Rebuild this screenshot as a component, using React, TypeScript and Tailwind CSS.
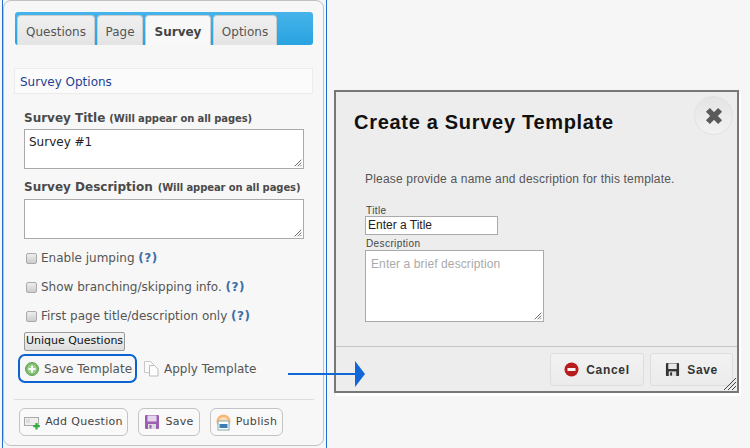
import React from "react";

const Grip = ({ size = 8, color = "#555" }: { size?: number; color?: string }) => (
  <svg width={size} height={size} viewBox="0 0 11 11" className="absolute right-[1px] bottom-[1px]">
    <path d="M1 10 L10 1 M5 10 L10 5 M8.5 10 L10 8.5" stroke={color} strokeWidth="1.2" fill="none" />
  </svg>
);

const Check = ({ label }: { label: string }) => (
  <div className="flex items-center h-[29px] pl-[22px] gap-[4px] text-[12px] text-[#555]">
    <span className="mt-[2px] w-[11px] h-[11px] rounded-[2px] border border-[#aaa] bg-gradient-to-b from-[#eee] to-[#ccc]" />
    <span className="whitespace-nowrap">
      {label} <b className="text-[#3b6ea5] tracking-[0.5px]">(?)</b>
    </span>
  </div>
);

const Floppy = ({ body, light, size = 20 }: { body: string; light: string; size?: number }) => (
  <svg width={size} height={size} viewBox="0 0 16 16">
    <rect x="1" y="1" width="14" height="14" rx="1" fill={body} />
    <rect x="3.5" y="1.5" width="9" height="6" fill={light} />
    <rect x="4" y="10" width="8" height="5" fill="#ddd" />
    <rect x="5.5" y="11" width="2" height="3.5" fill={body} />
  </svg>
);

const ActionButton = ({ w, icon, label, gap }: { w: string; icon: React.ReactNode; label: string; gap: string }) => (
  <button className={`${w} ${gap} h-[28px] flex items-center justify-center rounded-[6px] border border-[#c4c4c4] bg-[#f9f9f9] text-[11px] text-[#444] tracking-[0.3px]`}>
    {icon}
    <span>{label}</span>
  </button>
);

export default function App() {
  return (
    <div className="relative flex w-[750px] h-[448px] overflow-hidden bg-[#f6f6f6] font-['DejaVu_Sans',sans-serif]">
      <div className="ml-[2px] w-[325px] h-[448px] shrink-0 border-x border-[#1e6fd2] pr-[1px]">
        <div className="h-[446px] w-[321px] border border-[#c2c2c2] rounded-[8px] bg-[#f7f7f7] pl-[10px] pr-[10px] pt-[11px]">
          <div className="ml-[1px] flex items-end h-[33px] w-[298px] gap-[2px] pl-[2px] rounded-[3px] bg-gradient-to-b from-[#45b4ea] to-[#27a3e0]">
            {[
              ["Questions", "w-[78px]"],
              ["Page", "w-[46px]"],
              ["Survey", "w-[66px]"],
              ["Options", "w-[64px]"],
            ].map(([t, w]) => (
              <div
                key={t}
                className={
                  t === "Survey"
                    ? `${w} h-[30px] pt-[2px] flex items-center justify-center rounded-t-[4px] border-x border-t border-[#ccc] bg-[#f8f8f8] text-[12px] font-bold text-[#444]`
                    : `${w} h-[30px] pt-[2px] flex items-center justify-center rounded-t-[4px] border-x border-t border-[#ccc] bg-gradient-to-b from-[#f0f0f0] to-[#e4e4e4] text-[12px] text-[#555]`
                }
              >
                {t}
              </div>
            ))}
          </div>

          <div className="mt-[23px] h-[26px] w-[299px] flex items-center pl-[5px] pt-[1px] border border-[#ececec] bg-[#fbfbfb] text-[12px] text-[#1b3f94]">
            Survey Options
          </div>

          <div className="ml-[10px] mt-[14px] w-[280px]">
            <div className="h-[20px] flex items-center gap-[4px] font-bold text-[#4a4a4a] whitespace-nowrap">
              <span className="text-[12px]">Survey Title</span>
              <span className="text-[10px] tracking-[-0.1px]">(Will appear on all pages)</span>
            </div>
            <div className="relative mt-[1px] h-[40px] border border-[#aaa] bg-white pl-[4px] pt-[3px] text-[12px] text-[#222]">
              Survey #1
              <Grip />
            </div>
            <div className="mt-[8px] h-[20px] flex items-center gap-[5px] font-bold text-[#4a4a4a] whitespace-nowrap">
              <span className="text-[12px]">Survey Description</span>
              <span className="text-[10px] tracking-[-0.1px]">(Will appear on all pages)</span>
            </div>
            <div className="relative mt-[2px] h-[40px] border border-[#aaa] bg-white">
              <Grip />
            </div>
          </div>

          <div className="-ml-[10px] mt-[4px]">
            <Check label="Enable jumping" />
            <Check label="Show branching/skipping info." />
            <Check label="First page title/description only" />
          </div>

          <button className="block ml-[10px] mt-[2px] w-[101px] h-[19px] rounded-[2px] border border-[#999] bg-gradient-to-b from-[#f4f4f4] to-[#ddd] text-[11px] text-[#111] whitespace-nowrap">
            Unique Questions
          </button>

          <div className="flex items-center mt-[3px] ml-[4px] h-[29px] text-[12px] text-[#555]">
            <div className="flex items-center h-[29px] w-[119px] pl-[5px] gap-[5px] rounded-[7px] border-2 border-[#0b63d1]">
              <svg width="14" height="14" viewBox="0 0 14 14" className="shrink-0">
                <circle cx="7" cy="7" r="6.5" fill="#7dbb6b" stroke="#5f9f57" />
                <circle cx="7" cy="7" r="4.5" fill="#9ad08c" />
                <path d="M7 3.5v7M3.5 7h7" stroke="#fff" strokeWidth="2" />
              </svg>
              <span className="whitespace-nowrap">Save Template</span>
            </div>
            <svg width="17" height="17" viewBox="0 0 17 17" className="ml-[6px] shrink-0">
              <path d="M1.5 1.5h6l3 3v8h-9z" fill="#fafafa" stroke="#c8c8c8" />
              <path d="M6.5 5.5h5l3.5 3.5v7h-8.5z" fill="#fdfdfd" stroke="#bcbcbc" />
            </svg>
            <span className="ml-[4px] whitespace-nowrap">Apply Template</span>
          </div>

          <div className="mt-[16px] w-[300px] border-t border-[#ddd]" />

          <div className="flex gap-[10px] mt-[8px] ml-[5px]">
            <ActionButton
              w="w-[109px]"
              gap="gap-[4px]"
              label="Add Question"
              icon={
                <svg width="17" height="15" viewBox="0 0 17 15">
                  <rect x="0.5" y="2.5" width="14" height="8" fill="#eee" stroke="#aaa" />
                  <path d="M2 5h4M2 7h4" stroke="#ccc" />
                  <path d="M12.5 8v6.5M9.2 11.2h6.6" stroke="#2fae3a" strokeWidth="2.2" />
                </svg>
              }
            />
            <ActionButton w="w-[62px]" gap="gap-[5px]" label="Save" icon={<Floppy body="#9a5fb0" light="#e6d5ee" size={16} />} />
            <ActionButton
              w="w-[73px]"
              gap="gap-[5px]"
              label="Publish"
              icon={
                <svg width="15" height="17" viewBox="0 0 15 17">
                  <circle cx="7.5" cy="7.5" r="7" fill="#f7b775" />
                  <circle cx="7.5" cy="7.5" r="4.5" fill="#fbdcb8" />
                  <rect x="2" y="7" width="11" height="9" fill="#fff" stroke="#8aa" />
                  <rect x="3.5" y="10" width="8" height="4" fill="#3c7fb5" />
                </svg>
              }
            />
          </div>
        </div>
      </div>

      <div className="relative ml-[7px] mt-[90px] w-[405px] h-[303px] shrink-0 border-2 border-[#777] bg-[#ededed] shadow-[2px_3px_0_#fff] font-['Liberation_Sans',sans-serif]">
        <div className="absolute right-[4px] top-[4px] w-[39px] h-[39px] rounded-full border border-[#e2e2e2] bg-gradient-to-b from-[#e4e4e4] to-[#f2f2f2] flex items-center justify-center">
          <svg width="20" height="20" viewBox="0 0 18 18">
            <path d="M3.5 3.5 L14.5 14.5 M14.5 3.5 L3.5 14.5" stroke="#5a5a5a" strokeWidth="5" />
          </svg>
        </div>
        <h1 className="ml-[18px] mt-[18px] h-[24px] text-[20px] leading-[24px] font-bold text-[#111] tracking-[0.7px]">
          Create a Survey Template
        </h1>
        <p className="ml-[29px] mt-[37px] h-[16px] text-[12px] leading-[16px] text-[#555] tracking-[0.18px] whitespace-nowrap">
          Please provide a name and description for this template.
        </p>
        <div className="ml-[30px] mt-[18px] h-[10px] text-[10px] leading-[12px] text-[#444] tracking-[0.4px]">Title</div>
        <div className="ml-[29px] mt-[1px] w-[133px] h-[19px] border border-[#aaa] bg-white pl-[2px] text-[12px] leading-[16px] text-[#222]">
          Enter a Title
        </div>
        <div className="ml-[30px] mt-[3px] h-[12px] text-[10px] leading-[12px] text-[#444] tracking-[0.4px]">Description</div>
        <div className="relative ml-[29px] w-[179px] h-[72px] border border-[#aaa] bg-white pl-[5px] pt-[5px] text-[12px] leading-[16px] text-[#aaa] tracking-[0.1px]">
          Enter a brief description
          <Grip size={8} />
        </div>
        <div className="mt-[24px] border-t border-[#c6c6c6]" />
        <div className="flex justify-end gap-[6px] mt-[6px] pr-[4px]">
          <button className="w-[94px] h-[33px] flex items-center justify-center gap-[7px] rounded-[3px] border border-[#ddd] bg-gradient-to-b from-[#f2f2f2] to-[#ebebeb] text-[12px] font-bold text-[#333] tracking-[0.7px]">
            <svg width="15" height="15" viewBox="0 0 15 15">
              <circle cx="7.5" cy="7.5" r="7" fill="#b91c1c" />
              <rect x="3.5" y="6" width="8" height="3" fill="#f5f5f5" />
            </svg>
            Cancel
          </button>
          <button className="w-[83px] h-[33px] flex items-center justify-center gap-[7px] rounded-[3px] border border-[#ddd] bg-gradient-to-b from-[#f2f2f2] to-[#ebebeb] text-[12px] font-bold text-[#333] tracking-[0.6px]">
            <Floppy body="#333" light="#e8e8e8" size={15} />
            Save
          </button>
        </div>
        <svg width="14" height="14" viewBox="0 0 14 14" className="absolute right-0 bottom-0">
          <path d="M1 13 L13 1 M5 13 L13 5 M9 13 L13 9" stroke="#444" strokeWidth="1" fill="none" />
        </svg>
      </div>

      <svg width="80" height="28" viewBox="0 0 80 28" className="absolute left-[287px] top-[360px]">
        <rect x="1" y="13" width="68" height="2" fill="#0f68d6" />
        <path d="M68 1 L78 14 L68 27 Z" fill="#0f68d6" />
      </svg>
    </div>
  );
}
